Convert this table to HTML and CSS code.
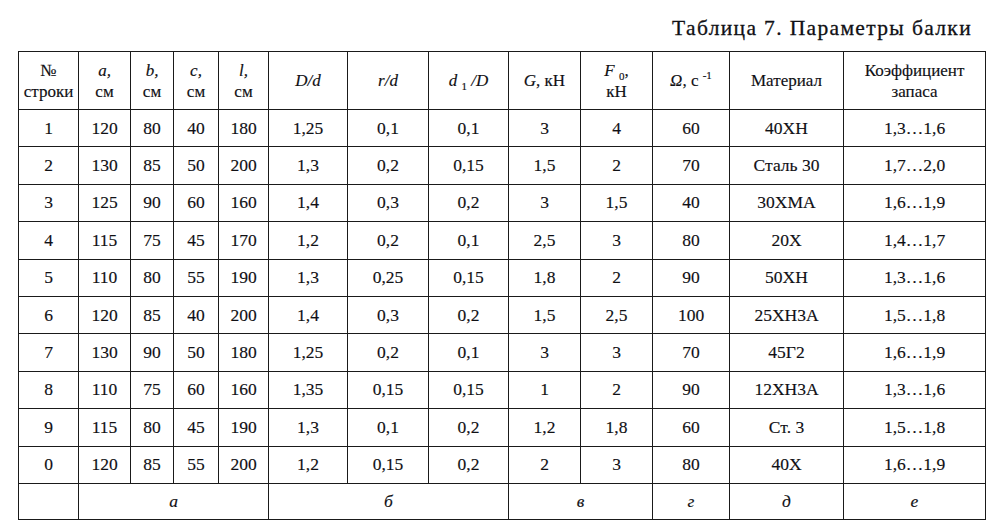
FILE: index.html
```html
<!DOCTYPE html>
<html lang="ru">
<head>
<meta charset="utf-8">
<link rel="stylesheet" href="styles.css">
</head>
<body>
<div class="page">
  <div class="caption">Таблица 7. Параметры балки</div>
  <table class="params">
    <colgroup>
      <col style="width:60px"><col style="width:52px"><col style="width:43px"><col style="width:45px"><col style="width:50px"><col style="width:79px"><col style="width:81px"><col style="width:80px"><col style="width:72px"><col style="width:72px"><col style="width:77px"><col style="width:114px"><col style="width:142px">
    </colgroup>
    <thead>
      <tr class="head">
        <th>№<br>строки</th>
        <th><i>a,</i><br>см</th>
        <th><i>b,</i><br>см</th>
        <th><i>c,</i><br>см</th>
        <th><i>l,</i><br>см</th>
        <th><i>D/d</i></th>
        <th><i>r/d</i></th>
        <th><i>d</i> <sub>1</sub> <i>/D</i></th>
        <th><i>G</i>, кН</th>
        <th><i>F</i> <sub>0</sub>,<br>кН</th>
        <th><i>Ω</i>, с <sup>-1</sup></th>
        <th>Материал</th>
        <th>Коэффициент<br>запаса</th>
      </tr>
    </thead>
    <tbody>
      <tr><td>1</td><td>120</td><td>80</td><td>40</td><td>180</td><td>1,25</td><td>0,1</td><td>0,1</td><td>3</td><td>4</td><td>60</td><td>40ХН</td><td>1,3…1,6</td></tr>
      <tr><td>2</td><td>130</td><td>85</td><td>50</td><td>200</td><td>1,3</td><td>0,2</td><td>0,15</td><td>1,5</td><td>2</td><td>70</td><td>Сталь 30</td><td>1,7…2,0</td></tr>
      <tr><td>3</td><td>125</td><td>90</td><td>60</td><td>160</td><td>1,4</td><td>0,3</td><td>0,2</td><td>3</td><td>1,5</td><td>40</td><td>30ХМА</td><td>1,6…1,9</td></tr>
      <tr><td>4</td><td>115</td><td>75</td><td>45</td><td>170</td><td>1,2</td><td>0,2</td><td>0,1</td><td>2,5</td><td>3</td><td>80</td><td>20Х</td><td>1,4…1,7</td></tr>
      <tr><td>5</td><td>110</td><td>80</td><td>55</td><td>190</td><td>1,3</td><td>0,25</td><td>0,15</td><td>1,8</td><td>2</td><td>90</td><td>50ХН</td><td>1,3…1,6</td></tr>
      <tr><td>6</td><td>120</td><td>85</td><td>40</td><td>200</td><td>1,4</td><td>0,3</td><td>0,2</td><td>1,5</td><td>2,5</td><td>100</td><td>25ХН3А</td><td>1,5…1,8</td></tr>
      <tr><td>7</td><td>130</td><td>90</td><td>50</td><td>180</td><td>1,25</td><td>0,2</td><td>0,1</td><td>3</td><td>3</td><td>70</td><td>45Г2</td><td>1,6…1,9</td></tr>
      <tr><td>8</td><td>110</td><td>75</td><td>60</td><td>160</td><td>1,35</td><td>0,15</td><td>0,15</td><td>1</td><td>2</td><td>90</td><td>12ХН3А</td><td>1,3…1,6</td></tr>
      <tr><td>9</td><td>115</td><td>80</td><td>45</td><td>190</td><td>1,3</td><td>0,1</td><td>0,2</td><td>1,2</td><td>1,8</td><td>60</td><td>Ст. 3</td><td>1,5…1,8</td></tr>
      <tr><td>0</td><td>120</td><td>85</td><td>55</td><td>200</td><td>1,2</td><td>0,15</td><td>0,2</td><td>2</td><td>3</td><td>80</td><td>40Х</td><td>1,6…1,9</td></tr>
      <tr class="variant"><td></td><td colspan="4"><i>а</i></td><td colspan="3"><i>б</i></td><td colspan="2"><i>в</i></td><td><i>г</i></td><td><i>д</i></td><td><i>е</i></td></tr>
    </tbody>
  </table>
</div>
</body>
</html>
```

FILE: styles.css
```css
html, body {
  margin: 0;
  padding: 0;
  background: #ffffff;
}

.page {
  width: 1000px;
  height: 531px;
  padding: 16px 0 0 18px;
  box-sizing: border-box;
  font-family: "Liberation Serif", "Times New Roman", serif;
  color: #101014;
}

.caption {
  text-align: right;
  padding-right: 28px;
  font-size: 21.5px;
  letter-spacing: 1.35px;
  line-height: 24px;
  height: 24px;
  margin-bottom: 11px;
  color: #101014;
  -webkit-text-stroke: 0.3px #101014;
}

.params {
  border-collapse: collapse;
  table-layout: fixed;
  width: 968px;
  font-size: 17.5px;
  -webkit-text-stroke: 0.15px #101014;
}

.params th,
.params td {
  border: 1px solid #1a1a1a;
  text-align: center;
  vertical-align: middle;
  padding: 0;
  font-weight: normal;
}

.params .head th {
  height: 57px;
  line-height: 21px;
  font-size: 17px;
}

.params tbody tr {
  height: 37.4px;
}

.params tbody tr.variant {
  height: 36px;
}

.params sub,
.params sup {
  font-size: 11px;
  line-height: 0;
}

.params i {
  font-style: italic;
}
```
